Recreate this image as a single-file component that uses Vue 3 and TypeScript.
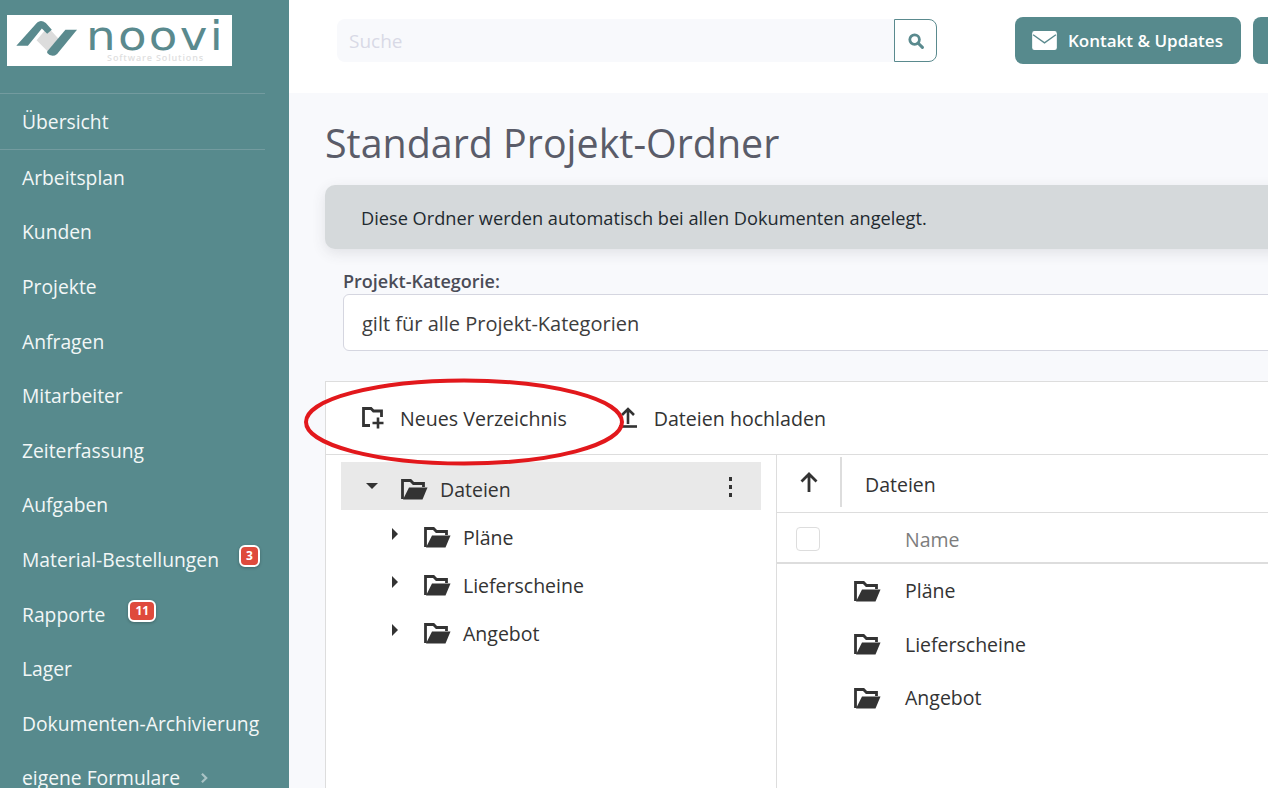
<script setup lang="ts">
interface NavItem { label: string; badge?: string; chevron?: boolean }
const nav: NavItem[] = [
  { label: 'Arbeitsplan' },
  { label: 'Kunden' },
  { label: 'Projekte' },
  { label: 'Anfragen' },
  { label: 'Mitarbeiter' },
  { label: 'Zeiterfassung' },
  { label: 'Aufgaben' },
  { label: 'Material-Bestellungen', badge: '3' },
  { label: 'Rapporte', badge: '11' },
  { label: 'Lager' },
  { label: 'Dokumenten-Archivierung' },
  { label: 'eigene Formulare', chevron: true },
]
const sub = ['Pläne', 'Lieferscheine', 'Angebot']
</script>

<template>
  <div class="page">
    <svg class="defs" aria-hidden="true">
      <symbol id="folder-open" viewBox="0 0 28 22">
        <path d="M2.5 21 V2.5 H10.5 L13.5 5.5 H23.5 V9" fill="none" stroke="#333" stroke-width="2.8" />
        <path d="M3 21.5 L9 9.5 H27.5 L22.5 21.5 Z" fill="#333" />
      </symbol>
    </svg>
    <aside class="side">
      <div class="logo">
        <svg class="mark" viewBox="20 10 190 120">
          <path d="M88 74 L122 34 L155 70 L122 108 Z" fill="#dcdcdc" />
          <path d="M27 90 L90 20 Q102 10 116 22 L134 42 L120 54 L104 38 L62 90 Z" fill="#5a8a8e" />
          <path d="M120 108 L175 42 L210 42 L150 115 Q135 128 120 112 Z" fill="#5a8a8e" />
        </svg>
        <div class="logo-text">
          <span class="noovi">noovi</span>
          <span class="soft">Software Solutions</span>
        </div>
      </div>
      <div class="nav-top">Übersicht</div>
      <nav class="nav">
        <a v-for="n in nav" :key="n.label" class="nav-item">
          <span>{{ n.label }}</span>
          <span v-if="n.badge" class="badge" :class="{ wide: n.badge.length > 1 }">{{ n.badge }}</span>
          <svg v-if="n.chevron" class="chev" viewBox="0 0 10 14" width="9" height="12">
            <path d="M2 2 L7 7 L2 12" fill="none" stroke="#a9c3c5" stroke-width="2.6" />
          </svg>
        </a>
      </nav>
    </aside>

    <div class="main">
      <header class="top">
        <div class="search">
          <div class="search-input">Suche</div>
          <button class="search-btn">
            <svg viewBox="0 0 16 16" width="16" height="16">
              <circle cx="6.6" cy="6.6" r="4.8" fill="none" stroke="#5a8a8e" stroke-width="2.8" />
              <path d="M10 10 L14.4 14.4" stroke="#5a8a8e" stroke-width="3" stroke-linecap="round" />
            </svg>
          </button>
        </div>
        <button class="btn">
          <svg viewBox="0 0 26 20" width="25" height="19">
            <rect width="26" height="20" rx="2.5" fill="#fff" />
            <path d="M1 4 L13 12.5 L25 4" fill="none" stroke="#5a8a8e" stroke-width="1.4" />
          </svg>
          <span>Kontakt &amp; Updates</span>
        </button>
        <button class="btn stub"></button>
      </header>

      <section class="content">
        <h1>Standard Projekt-Ordner</h1>
        <div class="alert">Diese Ordner werden automatisch bei allen Dokumenten angelegt.</div>
        <label class="lbl">Projekt-Kategorie:</label>
        <div class="select">gilt für alle Projekt-Kategorien</div>

        <div class="fm">
          <div class="toolbar">
            <div class="tool first">
              <svg viewBox="0 0 24 24" width="24" height="24">
                <path d="M9 19.5 H2.5 V2.5 H10 L12.5 5 H20.5 V11" fill="none" stroke="#333" stroke-width="2.8" />
                <path d="M17 11.5 V22.5 M11.5 17 H22.5" stroke="#333" stroke-width="2.6" />
              </svg>
              <span>Neues Verzeichnis</span>
            </div>
            <div class="tool">
              <svg viewBox="0 0 24 24" width="24" height="24">
                <path d="M11 18 V3 M5 9 L11 3 L17 9" fill="none" stroke="#333" stroke-width="2.6" />
                <path d="M2 20.5 H20" stroke="#333" stroke-width="2.6" />
              </svg>
              <span>Dateien hochladen</span>
            </div>
          </div>
          <div class="panes">
            <div class="tree">
              <div class="tree-row root">
                <i class="caret down"></i>
                <svg class="folder" width="28" height="22"><use href="#folder-open" /></svg>
                <span class="tree-label">Dateien</span>
                <span class="dots"><b></b><b></b><b></b></span>
              </div>
              <div v-for="s in sub" :key="s" class="tree-row child">
                <i class="caret right"></i>
                <svg class="folder" width="28" height="22"><use href="#folder-open" /></svg>
                <span class="tree-label">{{ s }}</span>
              </div>
            </div>
            <div class="list">
              <div class="crumbs">
                <div class="up">
                  <svg viewBox="0 0 20 22" width="20" height="22">
                    <path d="M10 21 V3 M2.5 10.5 L10 3 L17.5 10.5" fill="none" stroke="#333" stroke-width="2.8" />
                  </svg>
                </div>
                <span class="crumb">Dateien</span>
              </div>
              <div class="head">
                <span class="check"></span>
                <span class="name-h">Name</span>
              </div>
              <div v-for="s in sub" :key="s" class="row">
                <svg width="28" height="22"><use href="#folder-open" /></svg>
                <span>{{ s }}</span>
              </div>
            </div>
          </div>
          <svg class="ring" viewBox="0 0 324 90" width="324" height="90">
            <ellipse cx="160" cy="45" rx="158" ry="41.5" fill="none" stroke="#e2181c" stroke-width="4" />
          </svg>
        </div>
      </section>
    </div>
  </div>
</template>

<style>
html, body { margin: 0; overflow: hidden; }
</style>

<style scoped>
.page {
  display: flex;
  width: 1268px;
  height: 788px;
  overflow: hidden;
  font-family: "Open Sans", "Noto Sans", sans-serif;
  background: #f8f9fc;
  color: #333;
}
.defs { position: absolute; width: 0; height: 0; }
.side {
  flex: 0 0 289px;
  background: #578a8d;
  color: #f2f7f7;
  font-size: 19.3px;
  overflow: hidden;
}
.logo {
  display: flex;
  align-items: center;
  gap: 19px;
  width: 225px;
  height: 51px;
  margin: 15px 0 27px 7px;
  padding-left: 7px;
  box-sizing: border-box;
  background: #fff;
}
.mark { flex: none; width: 63px; height: 40px; margin-bottom: 4px; }
.logo-text { display: flex; flex-direction: column; align-items: center; line-height: 1; }
.noovi {
  display: inline-block;
  font-family: "DejaVu Sans", sans-serif;
  font-size: 40px;
  line-height: 34px;
  letter-spacing: 2px;
  color: #5a8a8e;
  transform: scaleX(1.17);
}
.soft {
  font-size: 9px;
  font-weight: 600;
  letter-spacing: .85px;
  line-height: 10px;
  color: #dfdfdf;
}
.nav-top {
  width: 265px;
  height: 57px;
  padding-left: 22px;
  box-sizing: border-box;
  line-height: 56px;
  border-top: 1px solid #739b9f;
  border-bottom: 1px solid #739b9f;
}
.nav { display: flex; flex-direction: column; }
.nav-item {
  display: flex;
  align-items: center;
  height: 54.6px;
  padding-left: 22px;
  white-space: nowrap;
}
.badge {
  margin: -6px 0 0 20px;
  padding: 0 5px;
  border: 2px solid #fff;
  border-radius: 6px;
  background: #df4a3c;
  color: #fff;
  font-size: 12px;
  font-weight: 700;
  line-height: 18px;
  box-shadow: 0 1px 3px rgba(0, 0, 0, .25);
}
.badge.wide { margin-left: 23px; }
.chev { margin-left: 20px; }
.main { flex: 1; min-width: 0; }
.top {
  display: flex;
  align-items: center;
  height: 93px;
  padding: 0 0 12px 48px;
  box-sizing: border-box;
  background: #fff;
}
.search { display: flex; flex: none; width: 600px; height: 43px; margin-right: 78px; }
.search-input {
  flex: 1;
  padding-left: 12px;
  background: #f8f9fc;
  border-radius: 8px 0 0 8px;
  color: #d8d9e6;
  font-size: 19px;
  line-height: 45px;
}
.search-btn {
  width: 43px;
  padding: 0;
  display: flex;
  align-items: center;
  justify-content: center;
  background: #fff;
  border: 1px solid #5a8a8e;
  border-radius: 0 8px 8px 0;
}
.btn {
  display: flex;
  flex: none;
  align-items: center;
  gap: 11px;
  height: 47px;
  width: 226px;
  margin-right: 12px;
  padding: 0 0 0 17px;
  border: 0;
  border-radius: 8px;
  background: #578a8d;
  color: #fff;
  font-family: inherit;
  font-size: 17px;
  font-weight: 600;
}
.stub { width: 60px; }
.content { padding: 23px 0 0 36px; }
h1 {
  margin: 0 0 15px;
  font-size: 39.4px;
  font-weight: 400;
  line-height: 54px;
  color: #5a5c69;
  white-space: nowrap;
}
.alert {
  width: 1000px;
  height: 64px;
  padding-left: 36px;
  box-sizing: border-box;
  background: #d5d9db;
  border-radius: 10px;
  line-height: 67px;
  font-size: 18.2px;
  color: #1f2a30;
  box-shadow: 0 4px 14px rgba(58, 59, 69, .12);
}
.lbl {
  display: block;
  margin: 19px 0 0 18px;
  font-size: 18px;
  font-weight: 600;
  line-height: 26px;
  color: #4a4c57;
}
.select {
  width: 1000px;
  height: 57px;
  margin-left: 18px;
  padding-left: 18px;
  box-sizing: border-box;
  background: #fff;
  border: 1px solid #d5d6e0;
  border-radius: 6px;
  font-size: 20px;
  line-height: 57px;
  color: #3d3d3d;
}
.fm {
  position: relative;
  width: 1000px;
  height: 420px;
  margin-top: 30px;
  background: #fff;
  border: 1px solid #ddd;
  box-sizing: border-box;
}
.toolbar { display: flex; height: 72px; border-bottom: 1px solid #ddd; font-size: 19.6px; align-items: center; color: #333; }
.tool { display: flex; align-items: center; }
.tool svg { margin-right: 13px; }
.tool.first { margin-left: 35px; margin-right: 50px; }
.tool.first svg { margin-right: 15px; }
.panes { display: flex; height: 340px; font-size: 19.5px; }
.tree { flex: 0 0 451px; padding: 7px 15px 0; box-sizing: border-box; border-right: 1px solid #ddd; }
.tree-row { display: flex; align-items: center; height: 48px; }
.root { background: #e9e9e9; padding-left: 25px; }
.child { padding-left: 51px; }
.folder { margin-top: 6px; flex: none; }
.caret { width: 0; height: 0; border-style: solid; flex: none; }
.caret.down { border-width: 6px 6px 0; border-color: #333 transparent transparent; margin-right: 22px; }
.caret.right { border-width: 6px 0 6px 6px; border-color: transparent transparent transparent #333; margin-right: 25px; }
.tree-label { margin-left: 12px; padding-top: 6px; }
.dots { display: flex; flex-direction: column; gap: 4px; margin-left: auto; margin-right: 29px; padding-top: 2px; }
.dots b { width: 3px; height: 4px; background: #333; display: block; }
.list { flex: 1; }
.crumbs { display: flex; align-items: center; height: 58px; box-sizing: border-box; border-bottom: 1px solid #ddd; }
.up {
  display: flex;
  align-items: center;
  justify-content: center;
  width: 65px;
  height: 50px;
  margin-bottom: 3px;
  border-right: 2px solid #ddd;
  box-sizing: border-box;
}
.crumb { margin-left: 23px; padding-top: 1px; }
.head {
  display: flex;
  align-items: center;
  height: 51px;
  padding-top: 3px;
  border-bottom: 2px solid #ddd;
  box-sizing: border-box;
  color: #7d7d7d;
}
.check { width: 22px; height: 22px; margin-left: 19px; border: 1px solid #ddd; border-radius: 4px; }
.name-h { margin-left: 85px; }
.row { display: flex; align-items: center; height: 53.5px; padding-left: 76px; }
.row span { margin-left: 24px; }
.ring { position: absolute; left: -22px; top: -5px; pointer-events: none; }
</style>
